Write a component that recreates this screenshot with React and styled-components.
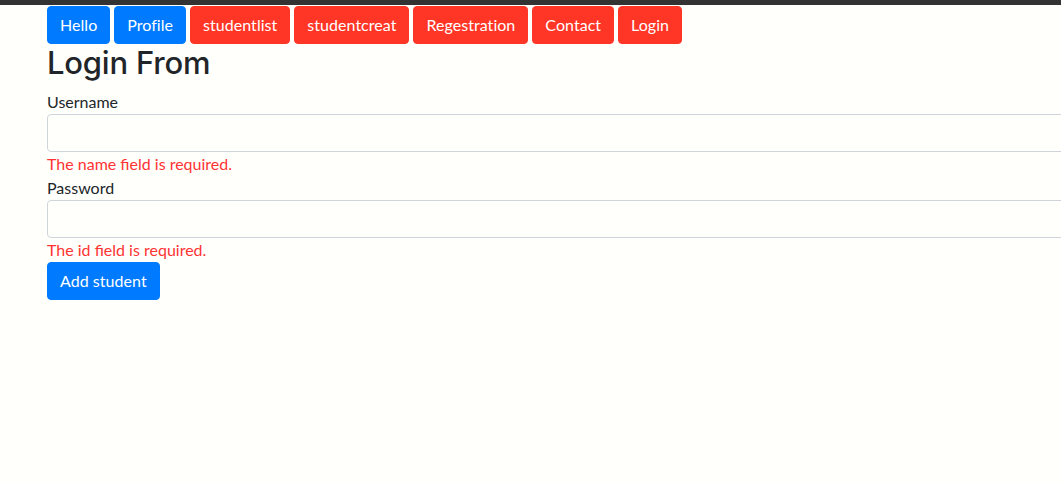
import React from "react";
import styled, { createGlobalStyle } from "styled-components";

const Global = createGlobalStyle`
  html, body { margin: 0; padding: 0; background: #fffffc; }
  body {
    font-family: "Lato", "Noto Sans", sans-serif;
    font-size: 16px;
    line-height: 1.5;
    color: #212529;
    overflow: hidden;
  }
  * { box-sizing: border-box; }
`;

const TopBar = styled.div`
  height: 5px;
  background: #333333;
`;

const Page = styled.div`
  padding: 1px 0 0 47px;
  overflow: hidden;
`;

const Nav = styled.nav`
  display: flex;
  gap: 4px;
  height: 38px;
`;

const NavButton = styled.button`
  font: inherit;
  font-size: 16px;
  line-height: 24px;
  padding: 6px 12px;
  letter-spacing: 0.04px;
  border: 1px solid ${(p) => (p.$variant === "primary" ? "#007bff" : "#ff3526")};
  background: ${(p) => (p.$variant === "primary" ? "#007bff" : "#ff3526")};
  color: #fff;
  border-radius: 4px;
  cursor: pointer;
  white-space: nowrap;
`;

const Title = styled.h2`
  margin: 0 0 8px;
  font-family: "Inter", "Lato", sans-serif;
  font-size: 31px;
  font-weight: 500;
  letter-spacing: -0.2px;
  line-height: 1.24;
  color: #212529;
`;

const Form = styled.form`
  display: flex;
  flex-direction: column;
  align-items: flex-start;
`;

const Label = styled.label`
  display: block;
  line-height: 24px;
`;

const Input = styled.input`
  display: block;
  width: 1100px;
  height: 38px;
  padding: 6px 12px;
  font: inherit;
  border: 1px solid #ced4da;
  border-radius: 4px;
  background: #fffffc;
`;

const ErrorText = styled.div`
  color: #ff3333;
  line-height: 24px;
`;

const Submit = styled(NavButton)``;

export default function App() {
  const links = [
    ["Hello", "primary"],
    ["Profile", "primary"],
    ["studentlist", "danger"],
    ["studentcreat", "danger"],
    ["Regestration", "danger"],
    ["Contact", "danger"],
    ["Login", "danger"],
  ];
  return (
    <>
      <Global />
      <TopBar />
      <Page>
        <Nav>
          {links.map(([t, v]) => (
            <NavButton key={t} $variant={v} type="button">
              {t}
            </NavButton>
          ))}
        </Nav>
        <Title>Login From</Title>
        <Form onSubmit={(e) => e.preventDefault()}>
          <Label>Username</Label>
          <Input type="text" />
          <ErrorText>The name field is required.</ErrorText>
          <Label>Password</Label>
          <Input type="password" />
          <ErrorText>The id field is required.</ErrorText>
          <Submit $variant="primary" type="submit">Add student</Submit>
        </Form>
      </Page>
    </>
  );
}
